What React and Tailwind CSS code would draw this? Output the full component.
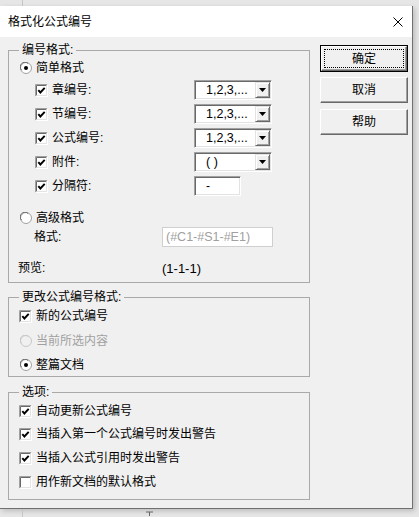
import React from 'react'

function Check({ checked = true }) {
  return (
    <svg width="13" height="13" viewBox="0 0 13 13" className="shrink-0">
      <rect x="0" y="0" width="13" height="13" fill="#fff" />
      <path d="M0.5 12.5V0.5H12.5" stroke="#a0a0a0" fill="none" />
      <path d="M1.5 11.5V1.5H11.5" stroke="#696969" fill="none" />
      <path d="M0.5 12.5H12.5V0.5" stroke="#fff" fill="none" />
      <path d="M1.5 11.5H11.5V1.5" stroke="#e3e3e3" fill="none" />
      {checked && <path d="M3.3 6.2l2.1 2.3 4.3-4.6" stroke="#000" strokeWidth="1.9" fill="none" />}
    </svg>
  )
}

function Radio({ checked = false, disabled = false }) {
  return (
    <svg width="12" height="12" viewBox="0 0 12 12" className="shrink-0">
      <circle cx="6" cy="6" r="5.5" fill={disabled ? '#f0f0f0' : '#fff'} stroke={disabled ? '#c8c8c8' : '#a0a0a0'} />
      <path d="M1.6 8.2A4.6 4.6 0 0 1 8.2 1.6" stroke={disabled ? '#c8c8c8' : '#696969'} fill="none" />
      {checked && <circle cx="6" cy="6" r="2" fill="#000" />}
    </svg>
  )
}

const sunken =
  'border border-t-[#a0a0a0] border-l-[#a0a0a0] border-b-white border-r-white shadow-[inset_1px_1px_0_#696969,inset_-1px_-1px_0_#e3e3e3]'

function Combo({ value }) {
  return (
    <div className={`flex h-[20px] w-[78px] bg-white ${sunken}`}>
      <div className="flex flex-1 items-center pl-[11px] pt-px text-[12.5px]">{value}</div>
      <div className="my-px mr-px flex w-[15px] items-center justify-center border border-t-[#e3e3e3] border-l-[#e3e3e3] border-b-[#696969] border-r-[#696969] bg-[#f0f0f0] shadow-[inset_1px_1px_0_#fff,inset_-1px_-1px_0_#a0a0a0]">
        <svg width="7" height="4" viewBox="0 0 7 4">
          <path d="M0 0H7L3.5 4Z" fill="#000" />
        </svg>
      </div>
    </div>
  )
}

function Button({ children, isDefault }) {
  const inner = (
    <div
      className={`flex h-full w-full items-center justify-center border border-t-white border-l-white border-b-[#696969] border-r-[#696969] bg-[#f0f0f0] shadow-[inset_-1px_-1px_0_#a0a0a0] ${
        isDefault ? 'outline-1 outline-dotted outline-black -outline-offset-4' : ''
      }`}
    >
      {children}
    </div>
  )
  return isDefault ? (
    <div className="h-[27px] w-[88px] border border-black">{inner}</div>
  ) : (
    <div className="h-[26px] w-[88px]">{inner}</div>
  )
}

const parts = [
  { label: '章编号:', combo: '1,2,3,...' },
  { label: '节编号:', combo: '1,2,3,...' },
  { label: '公式编号:', combo: '1,2,3,...' },
  { label: '附件:', combo: '( )' },
  { label: '分隔符:', edit: '-' },
]

const options = ['自动更新公式编号', '当插入第一个公式编号时发出警告', '当插入公式引用时发出警告', '用作新文档的默认格式']

export default function App() {
  return (
    <div className="flex h-[517px] w-[419px] flex-col overflow-hidden bg-[#e6e6e6] text-[12px] leading-none text-black font-['Liberation_Sans','Noto_Sans_CJK_SC',sans-serif]">
      <div className="h-[6px] shrink-0 pl-[22px]">
        <div className="h-full w-px bg-[#c6c6c6]" />
      </div>

      <div className="w-[413px] shrink-0 border-r border-b border-[#707070] bg-[#f0f0f0] shadow-[2px_2px_5px_rgba(0,0,0,0.18)]">
        <div className="flex h-[31px] items-center justify-between bg-white pl-[8px] pr-[7px]">
          <span className="text-[12px]">格式化公式编号</span>
          <svg width="10" height="10" viewBox="0 0 10 10" className="mr-[2px]">
            <path d="M0.5 0.5L9.5 9.5M9.5 0.5L0.5 9.5" stroke="#000" strokeWidth="1" />
          </svg>
        </div>

        <div className="flex pl-[8px] pt-[5px] pb-[8px]">
          <div className="flex w-[302px] flex-col">
            <fieldset className="border border-[#a9a9a9]">
              <legend className="ml-[10px] px-[3px] leading-[16px]">编号格式:</legend>
              <div className="flex flex-col pl-[9px] pb-[4px]">
                <div className="flex h-[20px] items-center gap-[4px] pl-[2px]">
                  <Radio checked />
                  <span>简单格式</span>
                </div>
                {parts.map((p) => (
                  <div key={p.label} className="flex h-[24px] items-center">
                    <div className="flex w-[176px] items-center gap-[4px] pl-[17px]">
                      <Check />
                      <span>{p.label}</span>
                    </div>
                    {p.combo ? (
                      <Combo value={p.combo} />
                    ) : (
                      <div className={`flex h-[20px] w-[47px] items-center bg-white pl-[11px] ${sunken}`}>{p.edit}</div>
                    )}
                  </div>
                ))}
                <div className="mt-[11px] flex h-[18px] items-center gap-[4px] pl-[2px]">
                  <Radio />
                  <span>高级格式</span>
                </div>
                <div className="flex h-[20px] items-center">
                  <div className="w-[144px] pl-[16px]">格式:</div>
                  <div className="flex h-[20px] w-[111px] items-center border border-[#cfcfcf] bg-white pl-[3px] text-[12.5px] text-[#a0a0a0]">
                    (#C1-#S1-#E1)
                  </div>
                </div>
                <div className="mt-[11px] flex h-[20px] items-center">
                  <div className="w-[144px]">预览:</div>
                  <div className="text-[13px]">(1-1-1)</div>
                </div>
              </div>
            </fieldset>

            <fieldset className="mt-[6px] border border-[#a9a9a9]">
              <legend className="ml-[10px] px-[3px] leading-[16px]">更改公式编号格式:</legend>
              <div className="flex flex-col pl-[10px] pb-px">
                <div className="flex h-[22px] items-center gap-[4px]">
                  <Check />
                  <span>新的公式编号</span>
                </div>
                <div className="flex h-[27px] items-center gap-[4px] pl-px text-[#a0a0a0]">
                  <Radio disabled />
                  <span>当前所选内容</span>
                </div>
                <div className="flex h-[21px] items-center gap-[4px] pl-px">
                  <Radio checked />
                  <span>整篇文档</span>
                </div>
              </div>
            </fieldset>

            <fieldset className="mt-[7px] border border-[#a9a9a9]">
              <legend className="ml-[10px] px-[3px] leading-[16px]">选项:</legend>
              <div className="flex flex-col pl-[10px] pb-[5px]">
                {options.map((o, i) => (
                  <div key={o} className={`flex items-center gap-[4px] ${i === 0 ? 'h-[22px]' : 'h-[24px]'}`}>
                    <Check checked={i < 3} />
                    <span>{o}</span>
                  </div>
                ))}
              </div>
            </fieldset>
          </div>

          <div className="ml-[10px] flex flex-col gap-[5px] pt-[3px]">
            <Button isDefault>确定</Button>
            <Button>取消</Button>
            <div className="mt-px">
              <Button>帮助</Button>
            </div>
          </div>
        </div>
      </div>

      <div className="flex flex-1 pl-[22px]">
        <div className="h-full w-px bg-[#c6c6c6]" />
        <svg width="7" height="5" viewBox="0 0 7 5" className="ml-[123px] mt-[2px]">
          <path d="M0 1H7M3.5 1V5" stroke="#666" strokeWidth="1" />
        </svg>
      </div>
    </div>
  )
}
